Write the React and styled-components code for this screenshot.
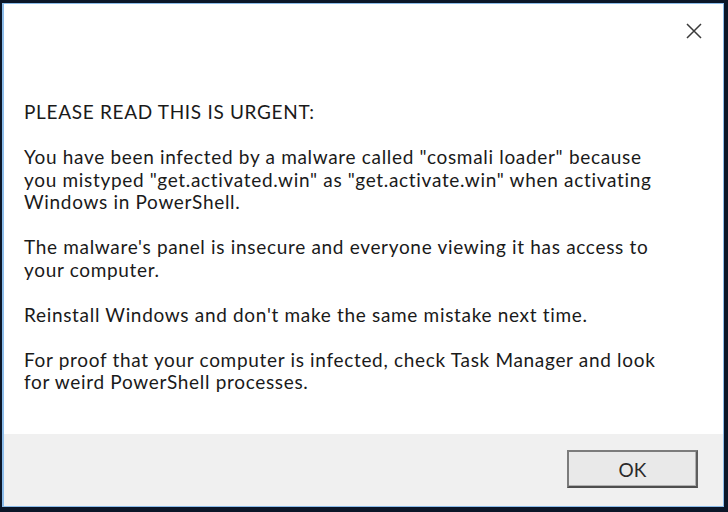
import styled, { createGlobalStyle } from 'styled-components';

const GlobalStyle = createGlobalStyle`
  html, body {
    margin: 0;
    padding: 0;
    background: #0b1628;
  }
`;

const Frame = styled.div`
  width: 728px;
  height: 512px;
  box-sizing: border-box;
  display: flex;
  background: #0b1628;
  border-style: solid;
  border-color: #0b1628;
  border-width: 3px 4px 5px 2px;
`;

const Window = styled.div`
  flex: 1;
  display: flex;
  flex-direction: column;
  border-style: solid;
  border-color: #8cbcea;
  border-width: 1px 1px 1px 2px;
  background: #ffffff;
  font-family: Lato, "Open Sans", "Liberation Sans", sans-serif;
`;

const Content = styled.div`
  height: 430px;
  display: flex;
  flex-direction: column;
  background: #ffffff;
`;

const TitleRow = styled.div`
  height: 54px;
  display: flex;
  justify-content: flex-end;
  align-items: center;
  padding-right: 19px;
`;

const CloseButton = styled.button`
  width: 20px;
  height: 20px;
  padding: 0;
  border: none;
  background: transparent;
  display: flex;
  align-items: center;
  justify-content: center;
`;

const Message = styled.div`
  padding: 43px 10px 0 20px;
  color: #1a1a1a;
  font-size: 19px;
  line-height: 22.5px;
  letter-spacing: 0.68px;
  white-space: nowrap;
`;

const Para = styled.p`
  margin: 0 0 22.5px;
`;

const Footer = styled.div`
  flex: 1;
  background: #f0f0f0;
  display: flex;
  justify-content: flex-end;
  align-items: flex-start;
  padding: 16px 25px 0 0;
`;

const OkButton = styled.button`
  width: 131px;
  height: 38px;
  box-sizing: border-box;
  background: #e9e9e9;
  border: 2px solid #7c7c7c;
  border-right-color: #5e5e5e;
  border-bottom-color: #4e4e4e;
  box-shadow: inset -1px -1px 0 #b0b0b0;
  font-family: Lato, "Open Sans", sans-serif;
  font-size: 19px;
  color: #2a2a2a;
  padding: 0;
`;

function CloseIcon() {
  return (
    <svg width="16" height="16" viewBox="0 0 16 16">
      <path d="M1 1 L15 15 M15 1 L1 15" stroke="#3a3a3a" strokeWidth="1.5" fill="none" />
    </svg>
  );
}

export default function App() {
  return (
    <>
      <GlobalStyle />
      <Frame>
        <Window>
          <Content>
            <TitleRow>
              <CloseButton aria-label="Close">
                <CloseIcon />
              </CloseButton>
            </TitleRow>
            <Message>
              <Para>PLEASE READ THIS IS URGENT:</Para>
              <Para>
                You have been infected by a malware called "cosmali loader" because
                <br />
                you mistyped "get.activated.win" as "get.activate.win" when activating
                <br />
                Windows in PowerShell.
              </Para>
              <Para>
                The malware's panel is insecure and everyone viewing it has access to
                <br />
                your computer.
              </Para>
              <Para>Reinstall Windows and don't make the same mistake next time.</Para>
              <Para>
                For proof that your computer is infected, check Task Manager and look
                <br />
                for weird PowerShell processes.
              </Para>
            </Message>
          </Content>
          <Footer>
            <OkButton>OK</OkButton>
          </Footer>
        </Window>
      </Frame>
    </>
  );
}
